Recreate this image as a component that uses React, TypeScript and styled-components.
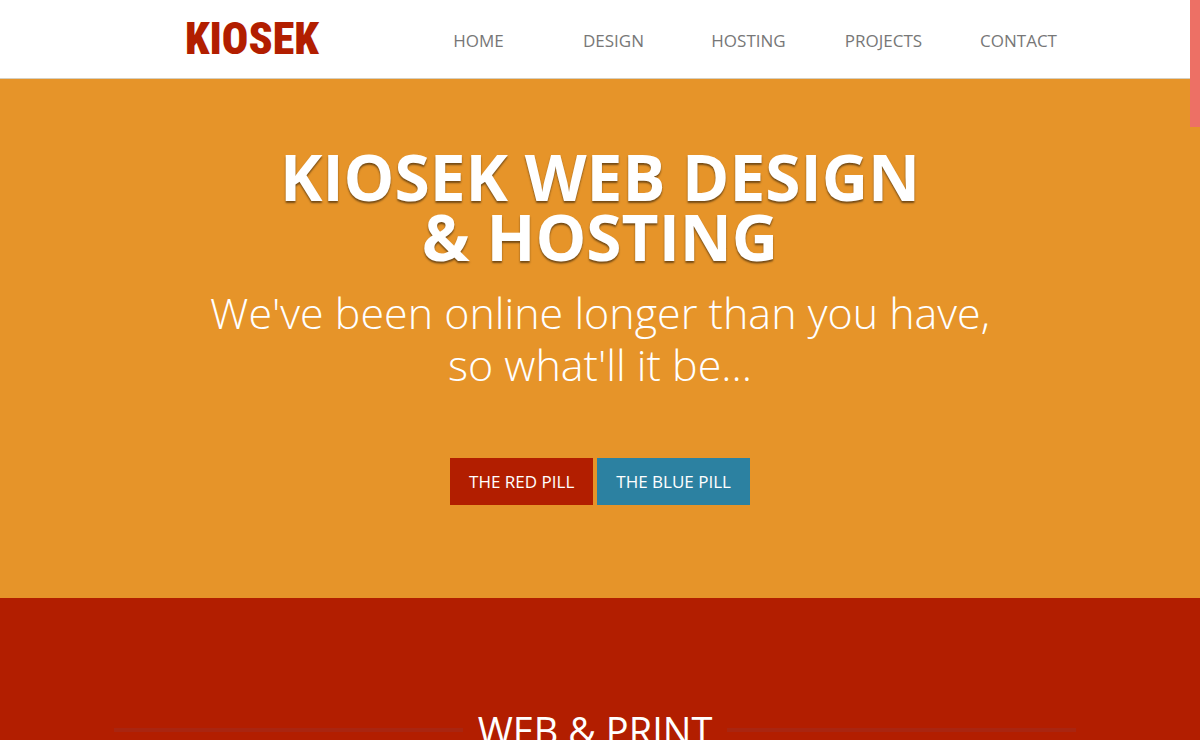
import React from "react";
import styled, { createGlobalStyle } from "styled-components";

const colors = {
  red: "#b21e00",
  orange: "#e69429",
  blue: "#2c81a1",
  thumb: "#ed7065",
};

const GlobalStyle = createGlobalStyle`
  html { scrollbar-width: none; }
  body {
    margin: 0;
    background: #fff;
    font-family: "Open Sans", "Noto Sans", sans-serif;
  }
`;

const Header = styled.header`
  background: #fff;
  border-bottom: 1px solid #d5cfc0;
`;

const HeaderInner = styled.div`
  display: flex;
  align-items: center;
  max-width: 972px;
  height: 78px;
  margin: 0 auto;
`;

const Logo = styled.a`
  flex: 1;
  padding-left: 71px;
  color: ${colors.red};
  font-family: "Roboto Condensed", "Liberation Sans Narrow", "Liberation Sans", sans-serif;
  font-size: 44px;
  line-height: 48px;
  font-weight: 900;
  text-decoration: none;
`;

const Nav = styled.nav`
  display: flex;
`;

const NavLink = styled.a`
  width: 135px;
  padding-top: 4px;
  color: #777;
  font-size: 17px;
  line-height: 24px;
  text-align: center;
  text-decoration: none;
`;

const Hero = styled.section`
  padding: 68px 24px 93px;
  background: ${colors.orange};
  color: #fff;
  text-align: center;
`;

const Title = styled.h1`
  margin: 0 0 20px;
  font-size: 64px;
  line-height: 60px;
  font-weight: 700;
  text-shadow: 0 2px 2px rgba(0, 0, 0, 0.5);
`;

const Tagline = styled.p`
  margin: 0 0 67px;
  font-size: 43px;
  line-height: 52px;
  font-weight: 300;
`;

const Actions = styled.div`
  display: flex;
  justify-content: center;
  gap: 4px;
`;

const PillButton = styled.button<{ $color: string }>`
  padding: 0 19px;
  border: 0;
  background: ${(p) => p.$color};
  color: #fff;
  font-family: inherit;
  font-size: 17px;
  line-height: 47px;
  cursor: pointer;
`;

const Services = styled.section`
  padding: 102px 124px 80px 114px;
  background: ${colors.red};
`;

const RuledHeading = styled.h2`
  display: flex;
  align-items: center;
  gap: 15px;
  margin: 0;
  color: #fff;
  font-size: 38px;
  line-height: 60px;
  font-weight: 400;

  &::before,
  &::after {
    content: "";
    flex: 1;
    height: 4px;
    background: #a92510;
  }
`;

const ScrollThumb = styled.div`
  position: fixed;
  top: 0;
  right: 0;
  width: 10px;
  height: 127px;
  background: ${colors.thumb};
`;

const links = ["HOME", "DESIGN", "HOSTING", "PROJECTS", "CONTACT"];

export default function App() {
  return (
    <>
      <GlobalStyle />
      <Header>
        <HeaderInner>
          <Logo href="#home">KIOSEK</Logo>
          <Nav>
            {links.map((label) => (
              <NavLink key={label} href={`#${label.toLowerCase()}`}>
                {label}
              </NavLink>
            ))}
          </Nav>
        </HeaderInner>
      </Header>
      <main>
        <Hero>
          <Title>
            KIOSEK WEB DESIGN
            <br />
            &amp; HOSTING
          </Title>
          <Tagline>
            We've been online longer than you have,
            <br />
            so what'll it be...
          </Tagline>
          <Actions>
            <PillButton $color={colors.red}>THE RED PILL</PillButton>
            <PillButton $color={colors.blue}>THE BLUE PILL</PillButton>
          </Actions>
        </Hero>
        <Services>
          <RuledHeading>WEB &amp; PRINT</RuledHeading>
        </Services>
      </main>
      <ScrollThumb />
    </>
  );
}
